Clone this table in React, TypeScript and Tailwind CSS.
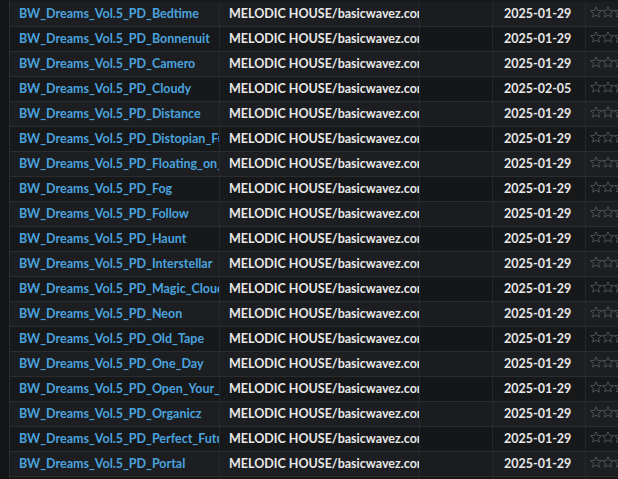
import React from "react";

const rows: [string, string][] = [
  ["Bedtime", "2025-01-29"],
  ["Bonnenuit", "2025-01-29"],
  ["Camero", "2025-01-29"],
  ["Cloudy", "2025-02-05"],
  ["Distance", "2025-01-29"],
  ["Distopian_Future", "2025-01-29"],
  ["Floating_on_Air", "2025-01-29"],
  ["Fog", "2025-01-29"],
  ["Follow", "2025-01-29"],
  ["Haunt", "2025-01-29"],
  ["Interstellar", "2025-01-29"],
  ["Magic_Clouds", "2025-01-29"],
  ["Neon", "2025-01-29"],
  ["Old_Tape", "2025-01-29"],
  ["One_Day", "2025-01-29"],
  ["Open_Your_Eyes", "2025-01-29"],
  ["Organicz", "2025-01-29"],
  ["Perfect_Future", "2025-01-29"],
  ["Portal", "2025-01-29"],
  ["Rain", "2025-01-29"],
];

function Star() {
  return (
    <svg width="12" height="12" viewBox="1 1 22 22" fill="none" stroke="#55585d" strokeWidth="1.6" strokeLinejoin="round">
      <path d="M12 2.5l2.9 6.6 7.1.6-5.4 4.7 1.6 7-6.2-3.7-6.2 3.7 1.6-7L2 9.7l7.1-.6z" />
    </svg>
  );
}

export default function App() {
  return (
    <div
      className="w-[618px] h-[479px] overflow-hidden bg-[#17181a] flex"
      style={{ fontFamily: "Lato, 'Noto Sans', sans-serif" }}
    >
      <div className="w-[10px] shrink-0 bg-[#141517] border-r border-[#2a2c30]" />
      <div className="flex flex-col pt-[2px] grow min-w-0">
        {rows.map(([name, date], i) => (
          <div
            key={i}
            className={`flex h-[25px] shrink-0 border-b border-[#2a2c30] text-[12.5px] font-bold ${
              i % 2 === 0 ? "bg-[#1c1e21]" : "bg-[#17181a]"
            }`}
          >
            <div className="w-[210px] shrink-0 overflow-hidden whitespace-nowrap pl-[9px] flex items-center text-[#4aa3df] border-r border-[#25272a]">
              BW_Dreams_Vol.5_PD_{name}
            </div>
            <div className="w-[200px] shrink-0 overflow-hidden whitespace-nowrap pl-[9px] flex items-center text-[#e8e8e8] border-r border-[#25272a]">
              MELODIC HOUSE/basicwavez.com
            </div>
            <div className="w-[73px] shrink-0 border-r border-[#25272a] bg-[#00000010]" />
            <div className="w-[93px] shrink-0 pl-[11px] flex items-center text-[#e8e8e8] border-r border-[#25272a]">
              {date}
            </div>
            <div className="flex items-center gap-0 pl-[4px] pb-[4px]">
              <Star />
              <Star />
              <Star />
            </div>
          </div>
        ))}
      </div>
    </div>
  );
}
